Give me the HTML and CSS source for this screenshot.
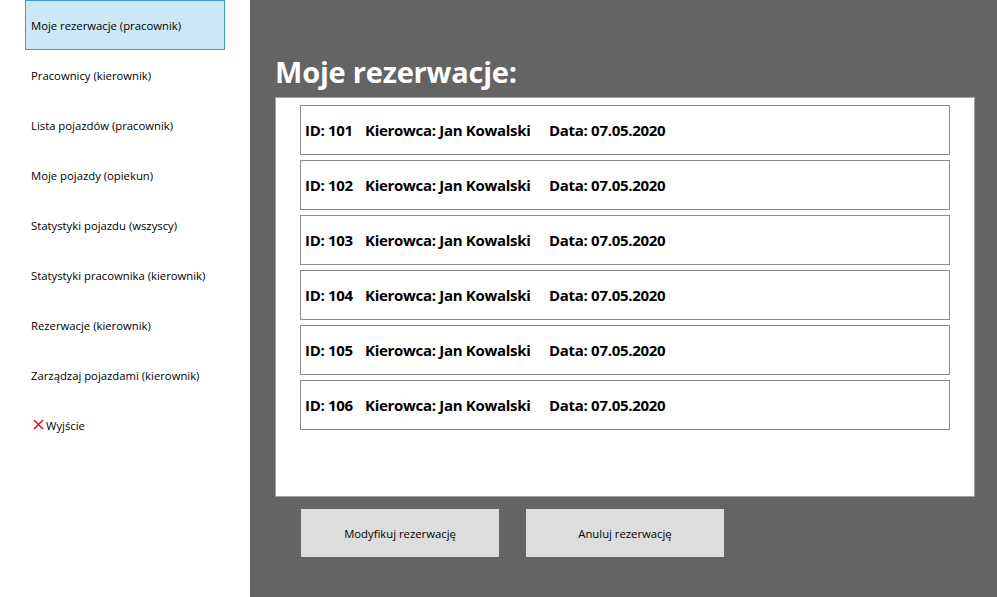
FILE: index.html
```html
<!DOCTYPE html>
<html lang="pl">
<head>
<meta charset="utf-8">
<title>Moje rezerwacje</title>
<link rel="stylesheet" href="styles.css">
</head>
<body>
<div class="app">
  <nav class="sidebar">
    <div class="nav-item active"><span>Moje rezerwacje (pracownik)</span></div>
    <div class="nav-item"><span>Pracownicy (kierownik)</span></div>
    <div class="nav-item"><span>Lista pojazdów (pracownik)</span></div>
    <div class="nav-item"><span>Moje pojazdy (opiekun)</span></div>
    <div class="nav-item"><span>Statystyki pojazdu (wszyscy)</span></div>
    <div class="nav-item"><span>Statystyki pracownika (kierownik)</span></div>
    <div class="nav-item"><span>Rezerwacje (kierownik)</span></div>
    <div class="nav-item"><span>Zarządzaj pojazdami (kierownik)</span></div>
    <div class="nav-item exit">
      <svg class="x-icon" width="11" height="11" viewBox="0 0 11 11"><path d="M1 1 L10 10 M10 1 L1 10" stroke="#e81123" stroke-width="1.6" fill="none"/></svg><span>Wyjście</span>
    </div>
  </nav>
  <main class="main">
    <h1 class="title">Moje rezerwacje:</h1>
    <section class="panel">
      <div class="row"><span class="id">ID: 101</span><span class="driver">Kierowca: Jan Kowalski</span><span class="date">Data: 07.05.2020</span></div>
      <div class="row"><span class="id">ID: 102</span><span class="driver">Kierowca: Jan Kowalski</span><span class="date">Data: 07.05.2020</span></div>
      <div class="row"><span class="id">ID: 103</span><span class="driver">Kierowca: Jan Kowalski</span><span class="date">Data: 07.05.2020</span></div>
      <div class="row"><span class="id">ID: 104</span><span class="driver">Kierowca: Jan Kowalski</span><span class="date">Data: 07.05.2020</span></div>
      <div class="row"><span class="id">ID: 105</span><span class="driver">Kierowca: Jan Kowalski</span><span class="date">Data: 07.05.2020</span></div>
      <div class="row"><span class="id">ID: 106</span><span class="driver">Kierowca: Jan Kowalski</span><span class="date">Data: 07.05.2020</span></div>
    </section>
    <div class="actions">
      <button class="btn">Modyfikuj rezerwację</button>
      <button class="btn">Anuluj rezerwację</button>
    </div>
  </main>
</div>
</body>
</html>
```

FILE: styles.css
```css
* { box-sizing: border-box; }
html, body { margin: 0; padding: 0; height: 100%; }
body {
  font-family: "Open Sans", "Noto Sans", "Liberation Sans", sans-serif;
  color: #000;
  background: #646464;
}
.app {
  display: flex;
  width: 997px;
  height: 597px;
}
.sidebar {
  width: 250px;
  background: #fff;
  display: flex;
  flex-direction: column;
  padding-left: 25px;
}
.nav-item {
  width: 200px;
  height: 50px;
  display: flex;
  align-items: center;
  padding-left: 5px;
  font-size: 11.3px;
  border: 1px solid transparent;
}
.nav-item.active {
  background: #cce8f6;
  border-color: #3d9ad4;
}
.nav-item.exit { padding-left: 7px; }
.x-icon { margin-right: 2px; margin-top: -1px; }
.main {
  flex: 1;
  background: #646464;
  padding-left: 25px;
}
.title {
  margin: 0;
  padding-top: 54px;
  height: 97px;
  font-size: 29px;
  font-weight: 700;
  color: #fff;
  line-height: 36px;
  letter-spacing: -0.2px;
}
.panel {
  width: 700px;
  height: 400px;
  background: #fff;
  border: 1px solid #a0a0a0;
  padding: 7px 0 0 24px;
  display: flex;
  flex-direction: column;
  gap: 5px;
}
.row {
  width: 650px;
  height: 50px;
  border: 1px solid #8a8a8a;
  display: flex;
  align-items: center;
  padding-left: 4px;
  font-size: 15px;
  font-weight: 700;
  letter-spacing: -0.3px;
}
.id { width: 60px; }
.driver { width: 184px; }
.actions {
  display: flex;
  gap: 27px;
  padding: 12px 0 0 26px;
}
.btn {
  width: 198px;
  height: 48px;
  background: #dddddd;
  border: none;
  font-family: inherit;
  font-size: 11.3px;
  color: #000;
  padding: 0;
}
```
